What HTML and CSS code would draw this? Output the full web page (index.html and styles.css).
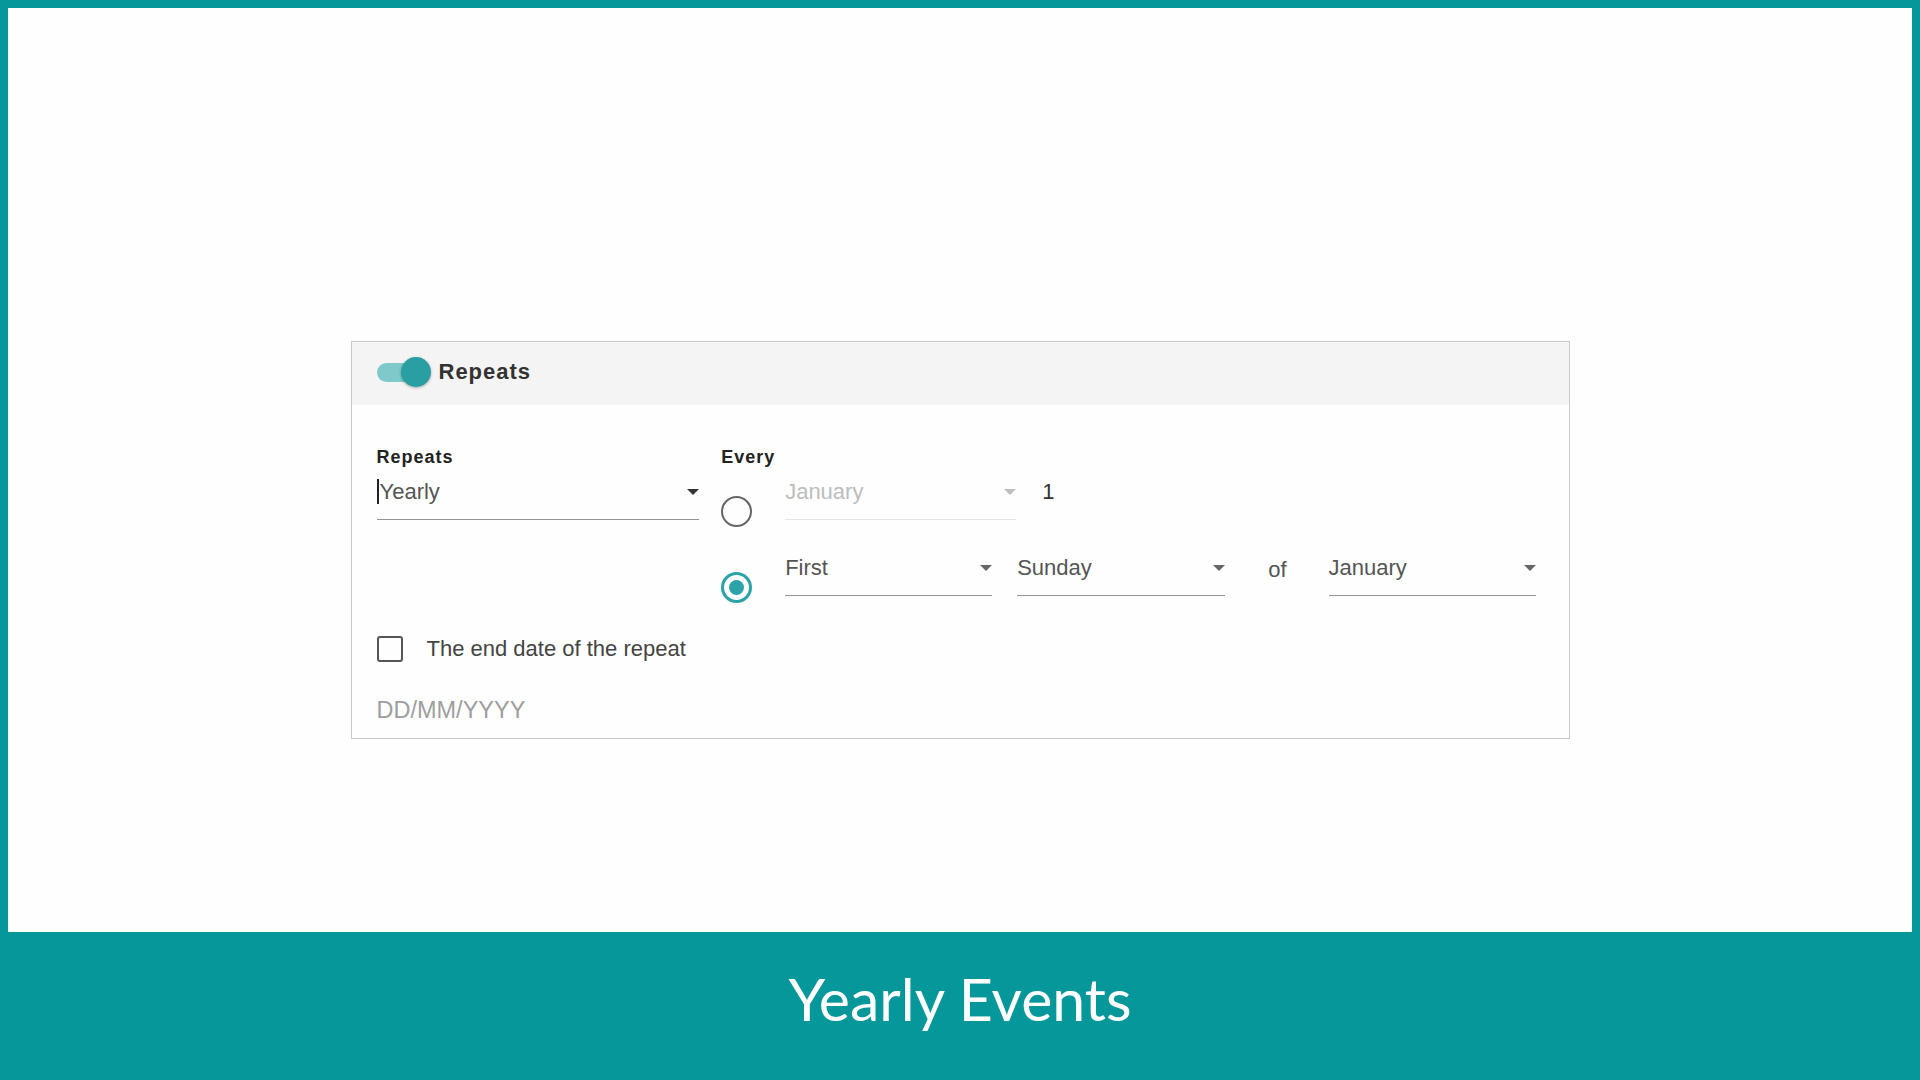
FILE: index.html
```html
<!DOCTYPE html>
<html>
<head>
  <title>Yearly Events</title>
  <link rel="stylesheet" href="styles.css">
</head>
<body>
  <div class="frame">
    <main class="stage">
      <section class="card">
        <header class="card-head">
          <span class="toggle"><span class="toggle-track"></span><span class="toggle-thumb"></span></span>
          <span class="card-title">Repeats</span>
        </header>

        <div class="card-body">
          <div class="cols">
            <!-- Repeats select -->
            <div class="col-repeat">
              <label class="field-label">Repeats</label>
              <div class="select">
                <span class="caret-line"></span><span class="select-text">Yearly</span>
                <span class="arrow dark"></span>
              </div>
            </div>

            <!-- Every -->
            <div class="col-every">
              <label class="field-label">Every</label>
              <div class="every-row first-row">
                <span class="radio"></span>
                <div class="select month disabled">
                  <span class="select-text">January</span>
                  <span class="arrow"></span>
                </div>
                <span class="plain day">1</span>
              </div>
              <div class="every-row">
                <span class="radio checked"></span>
                <div class="select order">
                  <span class="select-text">First</span>
                  <span class="arrow"></span>
                </div>
                <div class="select weekday">
                  <span class="select-text">Sunday</span>
                  <span class="arrow"></span>
                </div>
                <span class="plain of">of</span>
                <div class="select order">
                  <span class="select-text">January</span>
                  <span class="arrow"></span>
                </div>
              </div>
            </div>
          </div>

          <div class="check-row">
            <span class="checkbox"></span>
            <span class="check-label">The end date of the repeat</span>
          </div>
          <div class="date-input">DD/MM/YYYY</div>
        </div>
      </section>
    </main>
    <footer class="banner">Yearly Events</footer>
  </div>
</body>
</html>
```

FILE: styles.css
```css
body {
    margin: 0;
    background-color: #06979b;
    font-family: "Liberation Sans", Arial, sans-serif;
}

.frame {
    padding: 8px 8px 0 8px;
}

.stage {
    height: 924px;
    box-sizing: border-box;
    padding-top: 333px;
    background-color: #fefefe;
}

.card {
    width: 1219px;
    box-sizing: border-box;
    margin: 0 auto;
    border: 1px solid #c9c9c9;
    background-color: #fefefe;
}

.card-head {
    height: 63px;
    box-sizing: border-box;
    padding-bottom: 3px;
    display: flex;
    align-items: center;
    padding-left: 25px;
    background-color: #f4f4f4;
}

.toggle {
    position: relative;
    width: 54px;
    height: 30px;
}

.toggle-track {
    position: absolute;
    left: 0;
    top: 6px;
    width: 48px;
    height: 19px;
    border-radius: 10px;
    background-color: #80c9cb;
}

.toggle-thumb {
    position: absolute;
    right: 0;
    top: 0;
    width: 30px;
    height: 30px;
    border-radius: 50%;
    background-color: #2a9fa3;
    box-shadow: 0 1px 3px rgba(0, 0, 0, 0.3);
}

.card-title {
    margin-left: 8px;
    font-size: 22px;
    font-weight: bold;
    letter-spacing: 1px;
    color: #333;
}

.card-body {
    padding: 42px 33px 15px 25px;
}

.cols {
    display: flex;
    gap: 22px;
}

.col-repeat {
    width: 323px;
}

.field-label {
    display: block;
    font-size: 18px;
    line-height: 20px;
    font-weight: bold;
    letter-spacing: 1px;
    color: #222;
    margin-bottom: 12px;
}

.select {
    position: relative;
    font-size: 22px;
    line-height: 26px;
    padding-bottom: 14px;
    border-bottom: 1px solid #959595;
    color: #555;
}

.caret-line {
    display: inline-block;
    width: 2px;
    height: 25px;
    margin-right: 1px;
    vertical-align: -5px;
    background-color: #222;
}

.arrow {
    position: absolute;
    right: 0;
    top: 10px;
    border-left: 6px solid transparent;
    border-right: 6px solid transparent;
    border-top: 6px solid #666;
}

.arrow.dark {
    border-top-color: #333;
}

.every-row {
    display: flex;
    align-items: flex-start;
}

.first-row {
    margin-bottom: 28px;
}

.radio {
    width: 31px;
    height: 31px;
    box-sizing: border-box;
    margin-top: 17px;
    margin-right: 33px;
    border: 2px solid #666;
    border-radius: 50%;
    display: flex;
    align-items: center;
    justify-content: center;
}

.radio.checked {
    border: 3px solid #2ba3a7;
}

.radio.checked::after {
    content: "";
    width: 15px;
    height: 15px;
    border-radius: 50%;
    background-color: #2ba3a7;
}

.month {
    width: 231px;
}

.disabled {
    color: #bdbdbd;
    border-bottom-color: #e4e4e4;
}

.disabled .arrow {
    border-top-color: #bdbdbd;
}

.plain {
    font-size: 22px;
    line-height: 26px;
    color: #555;
}

.day {
    margin-left: 26px;
    color: #333;
}

.order {
    width: 207px;
}

.weekday {
    width: 208px;
    margin-left: 25px;
}

.of {
    padding-top: 2px;
    margin: 0 42px 0 43px;
}

.check-row {
    display: flex;
    align-items: center;
    margin-top: 33px;
}

.checkbox {
    width: 26px;
    height: 26px;
    box-sizing: border-box;
    margin-right: 24px;
    border: 2px solid #555;
    border-radius: 3px;
}

.check-label {
    font-size: 22px;
    line-height: 26px;
    color: #444;
}

.date-input {
    margin-top: 35px;
    font-size: 23.5px;
    line-height: 26px;
    color: #9e9e9e;
}

.banner {
    height: 148px;
    box-sizing: border-box;
    padding-top: 32px;
    text-align: center;
    font-family: Lato, "Liberation Sans", sans-serif;
    font-size: 59px;
    line-height: 1.2;
    color: #fff;
}
```
